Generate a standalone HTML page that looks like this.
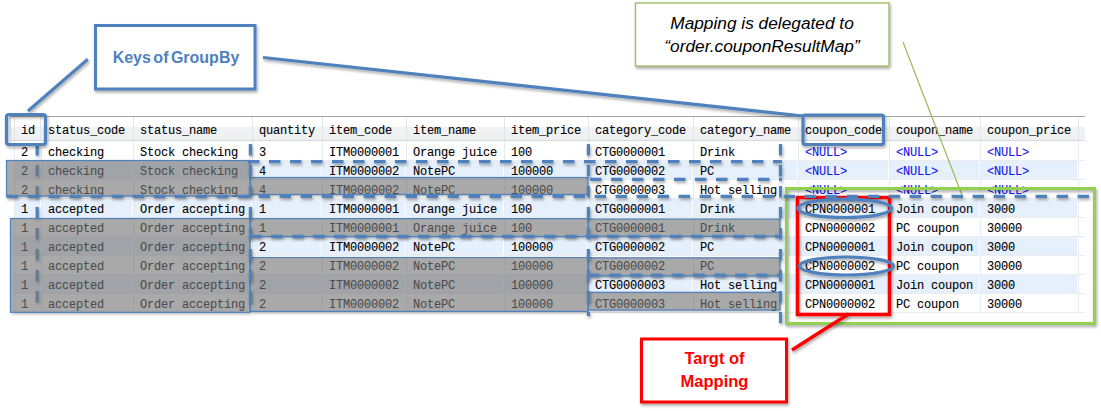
<!DOCTYPE html>
<html><head><meta charset="utf-8"><style>
html,body{margin:0;padding:0;background:#fff;width:1101px;height:411px;overflow:hidden;position:relative}
.t{position:absolute;font-family:"Liberation Mono",monospace;font-size:12px;letter-spacing:-0.2px;line-height:19px;color:#000;white-space:pre;-webkit-text-stroke:0.1px currentColor}
.n{color:#1515f0}
.c{position:absolute;text-align:center;white-space:nowrap}
</style></head><body>
<div style="position:absolute;left:10px;top:116px;width:1075px;height:1px;background:#a3a3a3"></div>
<div style="position:absolute;left:10px;top:117px;width:1075px;height:23px;background:linear-gradient(#ffffff 0,#ffffff 40%,#f1f2f4 45%,#eef0f2 100%)"></div>
<div style="position:absolute;left:10px;top:140px;width:1075px;height:1px;background:#d5d8dc"></div>
<div style="position:absolute;left:14px;top:117px;width:1px;height:23px;background:#e1e4e8"></div>
<div style="position:absolute;left:40px;top:117px;width:1px;height:23px;background:#e1e4e8"></div>
<div style="position:absolute;left:133px;top:117px;width:1px;height:23px;background:#e1e4e8"></div>
<div style="position:absolute;left:252px;top:117px;width:1px;height:23px;background:#e1e4e8"></div>
<div style="position:absolute;left:322px;top:117px;width:1px;height:23px;background:#e1e4e8"></div>
<div style="position:absolute;left:406px;top:117px;width:1px;height:23px;background:#e1e4e8"></div>
<div style="position:absolute;left:504px;top:117px;width:1px;height:23px;background:#e1e4e8"></div>
<div style="position:absolute;left:588px;top:117px;width:1px;height:23px;background:#e1e4e8"></div>
<div style="position:absolute;left:693px;top:117px;width:1px;height:23px;background:#e1e4e8"></div>
<div style="position:absolute;left:798px;top:117px;width:1px;height:23px;background:#e1e4e8"></div>
<div style="position:absolute;left:889px;top:117px;width:1px;height:23px;background:#e1e4e8"></div>
<div style="position:absolute;left:980px;top:117px;width:1px;height:23px;background:#e1e4e8"></div>
<div style="position:absolute;left:1078px;top:117px;width:1px;height:23px;background:#e1e4e8"></div>
<div style="position:absolute;left:10px;top:117px;width:1px;height:23px;background:#e1e4e8"></div>
<div class="t" style="left:21px;top:114px;height:23px;line-height:34px">id</div>
<div class="t" style="left:48px;top:114px;height:23px;line-height:34px">status_code</div>
<div class="t" style="left:140px;top:114px;height:23px;line-height:34px">status_name</div>
<div class="t" style="left:259px;top:114px;height:23px;line-height:34px">quantity</div>
<div class="t" style="left:329px;top:114px;height:23px;line-height:34px">item_code</div>
<div class="t" style="left:413px;top:114px;height:23px;line-height:34px">item_name</div>
<div class="t" style="left:511px;top:114px;height:23px;line-height:34px">item_price</div>
<div class="t" style="left:595px;top:114px;height:23px;line-height:34px">category_code</div>
<div class="t" style="left:700px;top:114px;height:23px;line-height:34px">category_name</div>
<div class="t" style="left:805px;top:114px;height:23px;line-height:34px">coupon_code</div>
<div class="t" style="left:896px;top:114px;height:23px;line-height:34px">coupon_name</div>
<div class="t" style="left:987px;top:114px;height:23px;line-height:34px">coupon_price</div>
<div style="position:absolute;left:14px;top:160px;width:1071px;height:1px;background:#ececec"></div>
<div style="position:absolute;left:15px;top:161px;width:25px;height:18px;background:#e6f0fc"></div>
<div style="position:absolute;left:42px;top:161px;width:90px;height:18px;background:#e6f0fc"></div>
<div style="position:absolute;left:134px;top:161px;width:117px;height:18px;background:#e6f0fc"></div>
<div style="position:absolute;left:253px;top:161px;width:68px;height:18px;background:#e6f0fc"></div>
<div style="position:absolute;left:323px;top:161px;width:82px;height:18px;background:#e6f0fc"></div>
<div style="position:absolute;left:407px;top:161px;width:96px;height:18px;background:#e6f0fc"></div>
<div style="position:absolute;left:505px;top:161px;width:82px;height:18px;background:#e6f0fc"></div>
<div style="position:absolute;left:589px;top:161px;width:103px;height:18px;background:#e6f0fc"></div>
<div style="position:absolute;left:694px;top:161px;width:103px;height:18px;background:#e6f0fc"></div>
<div style="position:absolute;left:799px;top:161px;width:89px;height:18px;background:#e6f0fc"></div>
<div style="position:absolute;left:890px;top:161px;width:89px;height:18px;background:#e6f0fc"></div>
<div style="position:absolute;left:981px;top:161px;width:96px;height:18px;background:#e6f0fc"></div>
<div style="position:absolute;left:14px;top:179px;width:1071px;height:1px;background:#ececec"></div>
<div style="position:absolute;left:14px;top:198px;width:1071px;height:1px;background:#ececec"></div>
<div style="position:absolute;left:15px;top:199px;width:25px;height:18px;background:#e6f0fc"></div>
<div style="position:absolute;left:42px;top:199px;width:90px;height:18px;background:#e6f0fc"></div>
<div style="position:absolute;left:134px;top:199px;width:117px;height:18px;background:#e6f0fc"></div>
<div style="position:absolute;left:253px;top:199px;width:68px;height:18px;background:#e6f0fc"></div>
<div style="position:absolute;left:323px;top:199px;width:82px;height:18px;background:#e6f0fc"></div>
<div style="position:absolute;left:407px;top:199px;width:96px;height:18px;background:#e6f0fc"></div>
<div style="position:absolute;left:505px;top:199px;width:82px;height:18px;background:#e6f0fc"></div>
<div style="position:absolute;left:589px;top:199px;width:103px;height:18px;background:#e6f0fc"></div>
<div style="position:absolute;left:694px;top:199px;width:103px;height:18px;background:#e6f0fc"></div>
<div style="position:absolute;left:799px;top:199px;width:89px;height:18px;background:#e6f0fc"></div>
<div style="position:absolute;left:890px;top:199px;width:89px;height:18px;background:#e6f0fc"></div>
<div style="position:absolute;left:981px;top:199px;width:96px;height:18px;background:#e6f0fc"></div>
<div style="position:absolute;left:14px;top:217px;width:1071px;height:1px;background:#ececec"></div>
<div style="position:absolute;left:14px;top:236px;width:1071px;height:1px;background:#ececec"></div>
<div style="position:absolute;left:15px;top:237px;width:25px;height:18px;background:#e6f0fc"></div>
<div style="position:absolute;left:42px;top:237px;width:90px;height:18px;background:#e6f0fc"></div>
<div style="position:absolute;left:134px;top:237px;width:117px;height:18px;background:#e6f0fc"></div>
<div style="position:absolute;left:253px;top:237px;width:68px;height:18px;background:#e6f0fc"></div>
<div style="position:absolute;left:323px;top:237px;width:82px;height:18px;background:#e6f0fc"></div>
<div style="position:absolute;left:407px;top:237px;width:96px;height:18px;background:#e6f0fc"></div>
<div style="position:absolute;left:505px;top:237px;width:82px;height:18px;background:#e6f0fc"></div>
<div style="position:absolute;left:589px;top:237px;width:103px;height:18px;background:#e6f0fc"></div>
<div style="position:absolute;left:694px;top:237px;width:103px;height:18px;background:#e6f0fc"></div>
<div style="position:absolute;left:799px;top:237px;width:89px;height:18px;background:#e6f0fc"></div>
<div style="position:absolute;left:890px;top:237px;width:89px;height:18px;background:#e6f0fc"></div>
<div style="position:absolute;left:981px;top:237px;width:96px;height:18px;background:#e6f0fc"></div>
<div style="position:absolute;left:14px;top:255px;width:1071px;height:1px;background:#ececec"></div>
<div style="position:absolute;left:14px;top:274px;width:1071px;height:1px;background:#ececec"></div>
<div style="position:absolute;left:15px;top:275px;width:25px;height:18px;background:#e6f0fc"></div>
<div style="position:absolute;left:42px;top:275px;width:90px;height:18px;background:#e6f0fc"></div>
<div style="position:absolute;left:134px;top:275px;width:117px;height:18px;background:#e6f0fc"></div>
<div style="position:absolute;left:253px;top:275px;width:68px;height:18px;background:#e6f0fc"></div>
<div style="position:absolute;left:323px;top:275px;width:82px;height:18px;background:#e6f0fc"></div>
<div style="position:absolute;left:407px;top:275px;width:96px;height:18px;background:#e6f0fc"></div>
<div style="position:absolute;left:505px;top:275px;width:82px;height:18px;background:#e6f0fc"></div>
<div style="position:absolute;left:589px;top:275px;width:103px;height:18px;background:#e6f0fc"></div>
<div style="position:absolute;left:694px;top:275px;width:103px;height:18px;background:#e6f0fc"></div>
<div style="position:absolute;left:799px;top:275px;width:89px;height:18px;background:#e6f0fc"></div>
<div style="position:absolute;left:890px;top:275px;width:89px;height:18px;background:#e6f0fc"></div>
<div style="position:absolute;left:981px;top:275px;width:96px;height:18px;background:#e6f0fc"></div>
<div style="position:absolute;left:14px;top:293px;width:1071px;height:1px;background:#ececec"></div>
<div style="position:absolute;left:14px;top:312px;width:1071px;height:1px;background:#ececec"></div>
<div style="position:absolute;left:14px;top:141px;width:1px;height:171px;background:#e4ebf4"></div>
<div style="position:absolute;left:41px;top:141px;width:1px;height:171px;background:#e4ebf4"></div>
<div style="position:absolute;left:133px;top:141px;width:1px;height:171px;background:#e4ebf4"></div>
<div style="position:absolute;left:252px;top:141px;width:1px;height:171px;background:#e4ebf4"></div>
<div style="position:absolute;left:322px;top:141px;width:1px;height:171px;background:#e4ebf4"></div>
<div style="position:absolute;left:406px;top:141px;width:1px;height:171px;background:#e4ebf4"></div>
<div style="position:absolute;left:504px;top:141px;width:1px;height:171px;background:#e4ebf4"></div>
<div style="position:absolute;left:588px;top:141px;width:1px;height:171px;background:#e4ebf4"></div>
<div style="position:absolute;left:693px;top:141px;width:1px;height:171px;background:#e4ebf4"></div>
<div style="position:absolute;left:798px;top:141px;width:1px;height:171px;background:#e4ebf4"></div>
<div style="position:absolute;left:889px;top:141px;width:1px;height:171px;background:#e4ebf4"></div>
<div style="position:absolute;left:980px;top:141px;width:1px;height:171px;background:#e4ebf4"></div>
<div style="position:absolute;left:1078px;top:141px;width:1px;height:171px;background:#e4ebf4"></div>
<div class="t" style="left:21px;top:144px">2</div>
<div class="t" style="left:48px;top:144px">checking</div>
<div class="t" style="left:140px;top:144px">Stock checking</div>
<div class="t" style="left:259px;top:144px">3</div>
<div class="t" style="left:329px;top:144px">ITM0000001</div>
<div class="t" style="left:413px;top:144px">Orange juice</div>
<div class="t" style="left:511px;top:144px">100</div>
<div class="t" style="left:595px;top:144px">CTG0000001</div>
<div class="t" style="left:700px;top:144px">Drink</div>
<div class="t n" style="left:805px;top:144px">&lt;NULL&gt;</div>
<div class="t n" style="left:896px;top:144px">&lt;NULL&gt;</div>
<div class="t n" style="left:987px;top:144px">&lt;NULL&gt;</div>
<div class="t" style="left:21px;top:163px">2</div>
<div class="t" style="left:48px;top:163px">checking</div>
<div class="t" style="left:140px;top:163px">Stock checking</div>
<div class="t" style="left:259px;top:163px">4</div>
<div class="t" style="left:329px;top:163px">ITM0000002</div>
<div class="t" style="left:413px;top:163px">NotePC</div>
<div class="t" style="left:511px;top:163px">100000</div>
<div class="t" style="left:595px;top:163px">CTG0000002</div>
<div class="t" style="left:700px;top:163px">PC</div>
<div class="t n" style="left:805px;top:163px">&lt;NULL&gt;</div>
<div class="t n" style="left:896px;top:163px">&lt;NULL&gt;</div>
<div class="t n" style="left:987px;top:163px">&lt;NULL&gt;</div>
<div class="t" style="left:21px;top:182px">2</div>
<div class="t" style="left:48px;top:182px">checking</div>
<div class="t" style="left:140px;top:182px">Stock checking</div>
<div class="t" style="left:259px;top:182px">4</div>
<div class="t" style="left:329px;top:182px">ITM0000002</div>
<div class="t" style="left:413px;top:182px">NotePC</div>
<div class="t" style="left:511px;top:182px">100000</div>
<div class="t" style="left:595px;top:182px">CTG0000003</div>
<div class="t" style="left:700px;top:182px">Hot selling</div>
<div class="t n" style="left:805px;top:182px">&lt;NULL&gt;</div>
<div class="t n" style="left:896px;top:182px">&lt;NULL&gt;</div>
<div class="t n" style="left:987px;top:182px">&lt;NULL&gt;</div>
<div class="t" style="left:21px;top:201px">1</div>
<div class="t" style="left:48px;top:201px">accepted</div>
<div class="t" style="left:140px;top:201px">Order accepting</div>
<div class="t" style="left:259px;top:201px">1</div>
<div class="t" style="left:329px;top:201px">ITM0000001</div>
<div class="t" style="left:413px;top:201px">Orange juice</div>
<div class="t" style="left:511px;top:201px">100</div>
<div class="t" style="left:595px;top:201px">CTG0000001</div>
<div class="t" style="left:700px;top:201px">Drink</div>
<div class="t" style="left:805px;top:201px">CPN0000001</div>
<div class="t" style="left:896px;top:201px">Join coupon</div>
<div class="t" style="left:987px;top:201px">3000</div>
<div class="t" style="left:21px;top:220px">1</div>
<div class="t" style="left:48px;top:220px">accepted</div>
<div class="t" style="left:140px;top:220px">Order accepting</div>
<div class="t" style="left:259px;top:220px">1</div>
<div class="t" style="left:329px;top:220px">ITM0000001</div>
<div class="t" style="left:413px;top:220px">Orange juice</div>
<div class="t" style="left:511px;top:220px">100</div>
<div class="t" style="left:595px;top:220px">CTG0000001</div>
<div class="t" style="left:700px;top:220px">Drink</div>
<div class="t" style="left:805px;top:220px">CPN0000002</div>
<div class="t" style="left:896px;top:220px">PC coupon</div>
<div class="t" style="left:987px;top:220px">30000</div>
<div class="t" style="left:21px;top:239px">1</div>
<div class="t" style="left:48px;top:239px">accepted</div>
<div class="t" style="left:140px;top:239px">Order accepting</div>
<div class="t" style="left:259px;top:239px">2</div>
<div class="t" style="left:329px;top:239px">ITM0000002</div>
<div class="t" style="left:413px;top:239px">NotePC</div>
<div class="t" style="left:511px;top:239px">100000</div>
<div class="t" style="left:595px;top:239px">CTG0000002</div>
<div class="t" style="left:700px;top:239px">PC</div>
<div class="t" style="left:805px;top:239px">CPN0000001</div>
<div class="t" style="left:896px;top:239px">Join coupon</div>
<div class="t" style="left:987px;top:239px">3000</div>
<div class="t" style="left:21px;top:258px">1</div>
<div class="t" style="left:48px;top:258px">accepted</div>
<div class="t" style="left:140px;top:258px">Order accepting</div>
<div class="t" style="left:259px;top:258px">2</div>
<div class="t" style="left:329px;top:258px">ITM0000002</div>
<div class="t" style="left:413px;top:258px">NotePC</div>
<div class="t" style="left:511px;top:258px">100000</div>
<div class="t" style="left:595px;top:258px">CTG0000002</div>
<div class="t" style="left:700px;top:258px">PC</div>
<div class="t" style="left:805px;top:258px">CPN0000002</div>
<div class="t" style="left:896px;top:258px">PC coupon</div>
<div class="t" style="left:987px;top:258px">30000</div>
<div class="t" style="left:21px;top:277px">1</div>
<div class="t" style="left:48px;top:277px">accepted</div>
<div class="t" style="left:140px;top:277px">Order accepting</div>
<div class="t" style="left:259px;top:277px">2</div>
<div class="t" style="left:329px;top:277px">ITM0000002</div>
<div class="t" style="left:413px;top:277px">NotePC</div>
<div class="t" style="left:511px;top:277px">100000</div>
<div class="t" style="left:595px;top:277px">CTG0000003</div>
<div class="t" style="left:700px;top:277px">Hot selling</div>
<div class="t" style="left:805px;top:277px">CPN0000001</div>
<div class="t" style="left:896px;top:277px">Join coupon</div>
<div class="t" style="left:987px;top:277px">3000</div>
<div class="t" style="left:21px;top:296px">1</div>
<div class="t" style="left:48px;top:296px">accepted</div>
<div class="t" style="left:140px;top:296px">Order accepting</div>
<div class="t" style="left:259px;top:296px">2</div>
<div class="t" style="left:329px;top:296px">ITM0000002</div>
<div class="t" style="left:413px;top:296px">NotePC</div>
<div class="t" style="left:511px;top:296px">100000</div>
<div class="t" style="left:595px;top:296px">CTG0000003</div>
<div class="t" style="left:700px;top:296px">Hot selling</div>
<div class="t" style="left:805px;top:296px">CPN0000002</div>
<div class="t" style="left:896px;top:296px">PC coupon</div>
<div class="t" style="left:987px;top:296px">30000</div>

<svg width="1101" height="411" style="position:absolute;left:0;top:0">
<defs>
<filter id="bl" filterUnits="userSpaceOnUse" x="0" y="0" width="1101" height="411"><feGaussianBlur stdDeviation="1.4"/><feOffset dx="1" dy="2"/></filter>
<filter id="sh" filterUnits="userSpaceOnUse" x="0" y="0" width="1101" height="411"><feDropShadow dx="1" dy="2" stdDeviation="1.5" flood-color="#000" flood-opacity="0.35"/></filter>
<mask id="gm" maskUnits="userSpaceOnUse" x="0" y="0" width="1101" height="411"><rect x="0" y="0" width="1101" height="411" fill="#fff"/><g fill="#000"><rect x="6.5" y="160.5" width="243.5" height="35.5"/><rect x="10.5" y="218.5" width="239.5" height="93.8"/><rect x="250.5" y="177.5" width="337.5" height="17"/><rect x="250.5" y="218.6" width="337.5" height="17.9"/><rect x="250.5" y="257.5" width="337.5" height="53.9"/><rect x="588.5" y="219" width="191.5" height="17.3"/><rect x="588.5" y="257.8" width="191.5" height="18.1"/><rect x="588.5" y="292.3" width="191.5" height="17.7"/></g></mask>
</defs>
<!-- gray overlays -->
<line x1="37.2" y1="144" x2="37.2" y2="304" stroke="#4f81bd" stroke-width="3.2" stroke-dasharray="11.5 9.5" filter="url(#sh)"/>
<g mask="url(#gm)"><g fill="#000" opacity="0.28" filter="url(#bl)"><rect x="6.5" y="160.5" width="243.5" height="35.5"/><rect x="10.5" y="218.5" width="239.5" height="93.8"/><rect x="250.5" y="177.5" width="337.5" height="17"/><rect x="250.5" y="218.6" width="337.5" height="17.9"/><rect x="250.5" y="257.5" width="337.5" height="53.9"/><rect x="588.5" y="219" width="191.5" height="17.3"/><rect x="588.5" y="257.8" width="191.5" height="18.1"/><rect x="588.5" y="292.3" width="191.5" height="17.7"/></g></g>
<g fill="rgba(118,118,118,0.63)" stroke="#4f81bd" stroke-width="1.2"><rect x="6.5" y="160.5" width="243.5" height="35.5"/><rect x="10.5" y="218.5" width="239.5" height="93.8"/><rect x="250.5" y="177.5" width="337.5" height="17"/><rect x="250.5" y="218.6" width="337.5" height="17.9"/><rect x="250.5" y="257.5" width="337.5" height="53.9"/><rect x="588.5" y="219" width="191.5" height="17.3"/><rect x="588.5" y="257.8" width="191.5" height="18.1"/><rect x="588.5" y="292.3" width="191.5" height="17.7"/></g>
<!-- coupon green/red -->
<line x1="903" y1="42" x2="962" y2="195" stroke="#9bbb59" stroke-width="1.2"/>
<rect x="786.5" y="188.5" width="308" height="135" fill="none" stroke="#92d050" stroke-width="3" filter="url(#sh)"/>
<rect x="797.5" y="197.5" width="92" height="117" fill="none" stroke="#ff0000" stroke-width="3.5" filter="url(#sh)"/>
<line x1="848.5" y1="314" x2="792" y2="350" stroke="#ff0000" stroke-width="3.5" filter="url(#sh)"/>
<!-- dashed lines -->
<g stroke="#4f81bd" stroke-width="3.2" stroke-dasharray="11.5 9.5" fill="none" filter="url(#sh)">
<line x1="6.6" y1="196.3" x2="1092" y2="196.3"/>
<line x1="248" y1="161.6" x2="782" y2="161.6"/>
<line x1="590" y1="179.4" x2="782" y2="179.4"/>
<line x1="250" y1="236.3" x2="782" y2="236.3"/>
<line x1="588" y1="275.2" x2="782" y2="275.2"/>
<line x1="250.4" y1="144" x2="250.4" y2="304"/>
<line x1="588.4" y1="144" x2="588.4" y2="316"/>
<line x1="780.5" y1="144" x2="780.5" y2="323"/>
</g>
<!-- callout lines -->
<g stroke="#4f81bd" stroke-width="3.2" fill="none" filter="url(#sh)">
<line x1="87.8" y1="59.3" x2="28" y2="111"/>
<line x1="263" y1="57.5" x2="803" y2="116"/>
<rect x="6.5" y="114.5" width="39" height="30" rx="2.5"/>
<rect x="803" y="115" width="80.5" height="29.5" rx="2"/>
<ellipse cx="844.7" cy="208.3" rx="46.7" ry="9.2"/>
<ellipse cx="846.5" cy="266" rx="46.9" ry="9"/>
</g>
<!-- callout boxes -->
<rect x="95.5" y="25.5" width="159.5" height="63.5" fill="#fff" stroke="#4f81bd" stroke-width="3" filter="url(#sh)"/>
<rect x="635.5" y="3" width="253.5" height="63" fill="#fff" stroke="#9bbb59" stroke-width="1.3" filter="url(#sh)"/>
<rect x="641.5" y="339" width="145" height="63" fill="#fff" stroke="#ff0000" stroke-width="3" filter="url(#sh)"/>
</svg>


<div class="c" style="left:95px;top:25px;width:162px;height:65px;font:bold 16px 'Liberation Sans',sans-serif;word-spacing:-2px;color:#4f81bd;line-height:65px">Keys of GroupBy</div>
<div class="c" style="left:635px;top:12px;width:254px;font:italic 17.3px 'Liberation Sans',sans-serif;color:#000;line-height:23px">Mapping is delegated to<br>“order.couponResultMap”</div>
<div class="c" style="left:641px;top:347px;width:147px;font:bold 16.5px 'Liberation Sans',sans-serif;color:#ff0000;line-height:23px">Targt of<br>Mapping</div>

</body></html>
